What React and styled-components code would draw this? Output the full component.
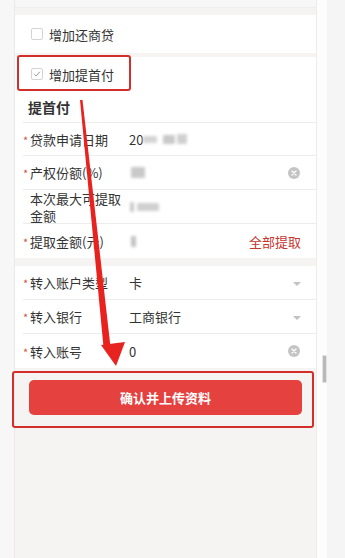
import React from "react";
import styled, { createGlobalStyle } from "styled-components";

const Global = createGlobalStyle`
  html, body { margin: 0; padding: 0; }
  body {
    background: #f7f7f7;
    font-family: "Noto Sans CJK SC", "Noto Sans", sans-serif;
    color: #333;
    -webkit-font-smoothing: antialiased;
  }
  #root { min-height: 558px; }
`;

const Page = styled.div`
  position: relative;
  display: flex;
  width: 345px;
  height: 558px;
  overflow: hidden;
  background: #f7f7f7;
`;

const Gutter = styled.div`
  width: 14px;
  flex: none;
  border-right: 1px solid #e9e9e9;
`;

const Panel = styled.div`
  width: 301px;
  flex: none;
  margin-top: 7px;
  padding-top: 7px;
  background: #f5f4f2;
  border-top: 1px solid #eeeeee;
  box-sizing: border-box;
  display: flex;
  flex-direction: column;
  gap: 4px;
`;

const Card = styled.div`
  background: #ffffff;
  display: flex;
  flex-direction: column;
  margin-bottom: ${(p) => p.$gap || 0}px;
`;

const CheckRow = styled.div`
  height: ${(p) => p.$h}px;
  display: flex;
  align-items: center;
  gap: 6px;
  padding-left: 16px;
  font-size: 13px;
  color: #333;
`;

const Box = styled.span`
  width: 10px;
  height: 10px;
  border: 1px solid #d4d4d4;
  border-radius: 2px;
  background: #fff;
  display: inline-flex;
  align-items: center;
  justify-content: center;
`;

const Title = styled.div`
  height: 31px;
  display: flex;
  align-items: center;
  padding-left: 13px;
  font-size: 14px;
  font-weight: 700;
  color: #333;
`;

const Rows = styled.div`
  margin-left: 8px;
  display: flex;
  flex-direction: column;
`;

const Row = styled.div`
  height: 34px;
  box-sizing: border-box;
  border-top: ${(p) => (p.$first ? "1px solid #ececec" : "none")};
  border-bottom: ${(p) => (p.$last ? "none" : "1px solid #ececec")};
  display: flex;
  align-items: center;
  padding-right: 15px;
  font-size: 13px;
`;

const Star = styled.span`
  width: 7px;
  flex: none;
  color: #c8584c;
  font-size: 11px;
  line-height: 1;
  padding-top: 2px;
`;

const Label = styled.span`
  width: 99px;
  flex: none;
  color: #333;
  line-height: 17px;
  white-space: ${(p) => (p.$wrap ? "normal" : "nowrap")};
  overflow: hidden;
`;

const Value = styled.span`
  flex: 1;
  display: flex;
  align-items: center;
  color: #333;
  min-width: 0;
`;

const Blur = styled.span`
  display: inline-block;
  width: ${(p) => p.$w}px;
  height: ${(p) => p.$h || 10}px;
  margin-left: ${(p) => p.$ml || 0}px;
  background: ${(p) => p.$c || "#c9c9c9"};
  filter: blur(1.4px);
  border-radius: 1px;
`;

const Action = styled.span`
  color: #c7352f;
  font-size: 13px;
`;

const Clear = styled.span`
  width: 12px;
  height: 12px;
  border-radius: 50%;
  background: #c4c4c4;
  display: inline-flex;
  align-items: center;
  justify-content: center;
  margin-right: 1px;
`;

const Caret = styled.span`
  width: 0;
  height: 0;
  border-left: 4px solid transparent;
  border-right: 4px solid transparent;
  border-top: 4px solid #c2c2c2;
  margin-right: 0px;
  margin-top: 3px;
`;

const ButtonArea = styled.div`
  padding: 12px 14px 0 14px;
  margin-top: -4px;
`;

const Button = styled.button`
  width: 273px;
  height: 35px;
  border: none;
  border-radius: 5px;
  background: #e5413f;
  color: #fff;
  font-family: "Noto Sans CJK SC", sans-serif;
  font-size: 13px;
  font-weight: 700;
  display: flex;
  align-items: center;
  justify-content: center;
  padding: 0;
`;

const RightStrip = styled.div`
  flex: 1;
  display: flex;
  margin-top: 0;
`;

const StripWhite = styled.div`
  width: 10px;
  border-left: 1px solid #ececec;
  background: #fdfdfd;
`;

const StripGray = styled.div`
  flex: 1;
  background: #f5f5f6;
`;

const Thumb = styled.div`
  position: absolute;
  left: 322px;
  top: 355px;
  width: 3px;
  height: 26px;
  background: #b9b9b9;
  border: 1px solid #e2e2e2;
  border-radius: 1px;
`;

const Highlight = styled.div`
  position: absolute;
  left: ${(p) => p.$x}px;
  top: ${(p) => p.$y}px;
  width: ${(p) => p.$w}px;
  height: ${(p) => p.$h}px;
  box-sizing: border-box;
  border: 2.5px solid #d22f2b;
  border-radius: 3px;
  pointer-events: none;
`;

const ArrowSvg = styled.svg`
  position: absolute;
  left: 0;
  top: 0;
  pointer-events: none;
`;

const ClearIcon = () => (
  <Clear>
    <svg width="6" height="6" viewBox="0 0 6 6">
      <path d="M1 1L5 5M5 1L1 5" stroke="#fff" strokeWidth="1.3" strokeLinecap="round" />
    </svg>
  </Clear>
);

export default function App() {
  return (
    <>
      <Global />
      <Page>
        <Gutter />
        <Panel>
          <Card>
            <CheckRow $h={38}>
              <Box />
              增加还商贷
            </CheckRow>
          </Card>
          <Card $gap={4}>
            <CheckRow $h={34}>
              <Box>
                <svg width="8" height="8" viewBox="0 0 8 8">
                  <path d="M1.3 4.2L3.2 6L6.8 1.8" fill="none" stroke="#9a9a9a" strokeWidth="1" />
                </svg>
              </Box>
              增加提首付
            </CheckRow>
            <Title>提首付</Title>
            <Rows>
              <Row $first>
                <Star>*</Star>
                <Label>贷款申请日期</Label>
                <Value>
                  20
                  <Blur $w={14} $h={7} $c="#d4d4d4" />
                  <Blur $w={12} $h={9} $ml={6} />
                  <Blur $w={10} $h={10} $ml={2} $c="#d0d0d0" />
                </Value>
              </Row>
              <Row>
                <Star>*</Star>
                <Label>产权份额(%)</Label>
                <Value>
                  <Blur $w={14} $h={11} $ml={2} />
                </Value>
                <ClearIcon />
              </Row>
              <Row>
                <Star />
                <Label $wrap>本次最大可提取金额</Label>
                <Value>
                  <Blur $w={4} $h={10} $ml={1} />
                  <Blur $w={22} $h={8} $ml={3} $c="#d0d0d0" />
                </Value>
              </Row>
              <Row $last>
                <Star>*</Star>
                <Label>提取金额(元)</Label>
                <Value>
                  <Blur $w={5} $h={11} $ml={2} $c="#c2c2c2" />
                </Value>
                <Action>全部提取</Action>
              </Row>
            </Rows>
          </Card>
          <Card>
            <Rows>
              <Row>
                <Star>*</Star>
                <Label>转入账户类型</Label>
                <Value>卡</Value>
                <Caret />
              </Row>
              <Row>
                <Star>*</Star>
                <Label>转入银行</Label>
                <Value>工商银行</Value>
                <Caret />
              </Row>
              <Row $last>
                <Star>*</Star>
                <Label>转入账号</Label>
                <Value>0</Value>
                <ClearIcon />
              </Row>
            </Rows>
          </Card>
          <ButtonArea>
            <Button>确认并上传资料</Button>
          </ButtonArea>
        </Panel>
        <RightStrip>
          <StripWhite />
          <StripGray />
        </RightStrip>
        <Thumb />
        <Highlight $x={17} $y={55} $w={114} $h={36} />
        <Highlight $x={12} $y={371} $w={302} $h={57} />
        <ArrowSvg width="345" height="558" viewBox="0 0 345 558">
          <polygon points="80,100 82.5,100 110.5,347 103.5,347" fill="#e8221f" />
          <polygon points="101,345 125,342 116,366" fill="#e8221f" />
        </ArrowSvg>
      </Page>
    </>
  );
}
